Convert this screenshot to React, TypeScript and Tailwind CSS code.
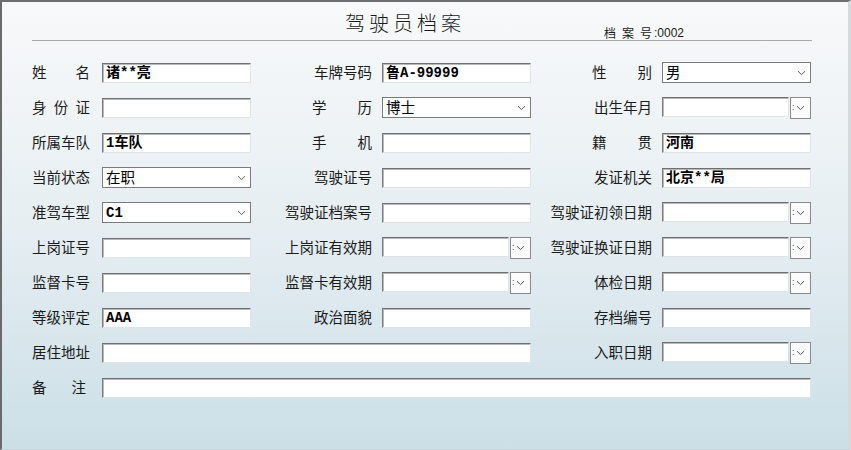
import React from 'react';

const label = "font-['Noto_Sans_CJK_SC','Noto_Sans',sans-serif] text-[14.5px] text-[#1b1b1b] leading-none";
const boxBorder =
  'border border-t-[#707070] border-l-[#7a7a7a] border-r-[#dfe4e7] border-b-[#dfe4e7] shadow-[inset_1px_1px_0_#b9b9b9] bg-white';
const valueFont = "font-['Liberation_Mono','Noto_Sans_CJK_SC',monospace] font-bold text-[14px] text-black";

function Chevron() {
  return (
    <svg width="9" height="6" viewBox="0 0 9 6" className="shrink-0">
      <path d="M1 1.2 L4.5 4.6 L8 1.2" fill="none" stroke="#5a5a5a" strokeWidth="1" />
    </svg>
  );
}

// label column: 1 = narrow (left col), 2/3 = right aligned wide
function Label({ text, col, spread }: { text: string; col: 1 | 2 | 3; spread?: number }) {
  const w = col === 1 ? 'w-[60px]' : 'w-[121px] justify-end';
  const chars = text.split('');
  return (
    <div className={`${w} flex shrink-0 ${label}`}>
      {spread ? (
        <span className="flex justify-between" style={{ width: spread }}>
          {chars.map((c, i) => (
            <span key={i}>{c}</span>
          ))}
        </span>
      ) : (
        <span>{text}</span>
      )}
    </div>
  );
}

function TextBox({ value = '', w = 'w-[149px]' }: { value?: string; w?: string }) {
  return (
    <div className={`${w} h-[20px] ml-[10px] shrink-0 flex items-center pl-[3px] pt-[1px] ${boxBorder} ${valueFont}`}>
      {value}
    </div>
  );
}

function SelectBox({ value = '', bold }: { value?: string; bold?: boolean }) {
  return (
    <div
      className={`w-[149px] h-[21px] ml-[10px] shrink-0 flex items-center justify-between pl-[3px] pr-[4px] bg-white border border-[#7b7b7b] ${
        bold ? valueFont : "font-['Noto_Sans_CJK_SC',sans-serif] text-[14.5px] text-black"
      }`}
    >
      <span className="leading-none">{value}</span>
      <Chevron />
    </div>
  );
}

function DateBox() {
  return (
    <div className="w-[149px] ml-[10px] shrink-0 flex items-start justify-between">
      <div className={`w-[127px] h-[20px] ${boxBorder}`} />
      <div className="w-[21px] h-[22px] border border-[#8a8a8a] bg-[#fbfbfb] flex items-center pl-[1px] gap-[1px]">
        <span className="text-[9px] leading-none text-[#444] font-['Liberation_Sans',sans-serif]">:</span>
        <Chevron />
      </div>
    </div>
  );
}

function Row({ children }: { children: React.ReactNode }) {
  return <div className="h-[35px] flex items-center">{children}</div>;
}

export default function App() {
  return (
    <div className="w-[851px] h-[450px] overflow-hidden border-t-2 border-l-2 border-t-[#6f6f6f] border-l-[#6b6b6b] border-r-[3px] border-r-[#d5dadd] border-b border-b-[#c3d3da] bg-linear-to-b from-[#f8f9fa] via-[#e6eef2] to-[#cbdfe7]">
      <div className="ml-[30px] mr-[36px] h-[39px] border-b border-[#a9a9a9] flex items-start">
        <div className="ml-[313px] mt-[9px] text-[20px] leading-[24px] tracking-[4px] text-[#1a1a1a] font-['Noto_Sans_CJK_SC',sans-serif] font-light">
          驾驶员档案
        </div>
        <div className="ml-auto mr-[128px] mt-[24px] text-[12px] leading-[14px] text-[#1a1a1a] flex font-['Noto_Sans_CJK_SC',sans-serif]">
          <span className="tracking-[6px]">档案</span>
          <span>号</span>
          <span className="font-['Liberation_Sans',sans-serif] ml-[2px]">:0002</span>
        </div>
      </div>

      <div className="pl-[30px] mt-[14px]">
        <Row>
          <Label text="姓名" col={1} spread={58} />
          <TextBox value="诸**亮" />
          <Label text="车牌号码" col={2} />
          <TextBox value="鲁A-99999" />
          <Label text="性别" col={3} spread={60} />
          <SelectBox value="男" />
        </Row>
        <Row>
          <Label text="身份证" col={1} spread={58} />
          <TextBox />
          <Label text="学历" col={2} spread={60} />
          <SelectBox value="博士" />
          <Label text="出生年月" col={3} />
          <DateBox />
        </Row>
        <Row>
          <Label text="所属车队" col={1} />
          <TextBox value="1车队" />
          <Label text="手机" col={2} spread={60} />
          <TextBox />
          <Label text="籍贯" col={3} spread={60} />
          <TextBox value="河南" />
        </Row>
        <Row>
          <Label text="当前状态" col={1} />
          <SelectBox value="在职" />
          <Label text="驾驶证号" col={2} />
          <TextBox />
          <Label text="发证机关" col={3} />
          <TextBox value="北京**局" />
        </Row>
        <Row>
          <Label text="准驾车型" col={1} />
          <SelectBox value="C1" bold />
          <Label text="驾驶证档案号" col={2} />
          <TextBox />
          <Label text="驾驶证初领日期" col={3} />
          <DateBox />
        </Row>
        <Row>
          <Label text="上岗证号" col={1} />
          <TextBox />
          <Label text="上岗证有效期" col={2} />
          <DateBox />
          <Label text="驾驶证换证日期" col={3} />
          <DateBox />
        </Row>
        <Row>
          <Label text="监督卡号" col={1} />
          <TextBox />
          <Label text="监督卡有效期" col={2} />
          <DateBox />
          <Label text="体检日期" col={3} />
          <DateBox />
        </Row>
        <Row>
          <Label text="等级评定" col={1} />
          <TextBox value="AAA" />
          <Label text="政治面貌" col={2} />
          <TextBox />
          <Label text="存档编号" col={3} />
          <TextBox />
        </Row>
        <Row>
          <Label text="居住地址" col={1} />
          <TextBox w="w-[429px]" />
          <Label text="入职日期" col={3} />
          <DateBox />
        </Row>
        <Row>
          <Label text="备注" col={1} spread={54} />
          <TextBox w="w-[709px]" />
        </Row>
      </div>
    </div>
  );
}
